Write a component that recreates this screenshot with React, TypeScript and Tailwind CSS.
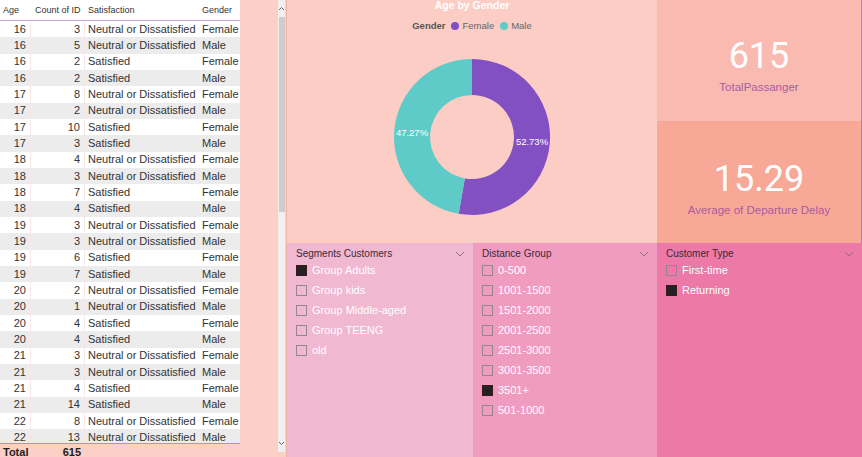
import React from "react";

const rows: [number, number, string, string][] = [
  [16, 3, "Neutral or Dissatisfied", "Female"],
  [16, 5, "Neutral or Dissatisfied", "Male"],
  [16, 2, "Satisfied", "Female"],
  [16, 2, "Satisfied", "Male"],
  [17, 8, "Neutral or Dissatisfied", "Female"],
  [17, 2, "Neutral or Dissatisfied", "Male"],
  [17, 10, "Satisfied", "Female"],
  [17, 3, "Satisfied", "Male"],
  [18, 4, "Neutral or Dissatisfied", "Female"],
  [18, 3, "Neutral or Dissatisfied", "Male"],
  [18, 7, "Satisfied", "Female"],
  [18, 4, "Satisfied", "Male"],
  [19, 3, "Neutral or Dissatisfied", "Female"],
  [19, 3, "Neutral or Dissatisfied", "Male"],
  [19, 6, "Satisfied", "Female"],
  [19, 7, "Satisfied", "Male"],
  [20, 2, "Neutral or Dissatisfied", "Female"],
  [20, 1, "Neutral or Dissatisfied", "Male"],
  [20, 4, "Satisfied", "Female"],
  [20, 4, "Satisfied", "Male"],
  [21, 3, "Neutral or Dissatisfied", "Female"],
  [21, 3, "Neutral or Dissatisfied", "Male"],
  [21, 4, "Satisfied", "Female"],
  [21, 14, "Satisfied", "Male"],
  [22, 8, "Neutral or Dissatisfied", "Female"],
  [22, 13, "Neutral or Dissatisfied", "Male"],
];

const font = { fontFamily: "'Liberation Sans', Arial, sans-serif" };

function Chevron() {
  return (
    <svg width="10" height="6" viewBox="0 0 10 6" className="shrink-0">
      <polyline points="1,1 5,5 9,1" fill="none" stroke="#8a6f7f" strokeWidth="1" />
    </svg>
  );
}

function Slicer({
  title,
  items,
  checked,
  bg,
  w,
}: {
  title: string;
  items: string[];
  checked: string;
  bg: string;
  w: string;
}) {
  return (
    <div className={`${w} ${bg} h-full flex flex-col pt-[4px] pl-[9px] pr-[8px]`}>
      <div className="flex items-center justify-between h-[13px] text-[10px] text-[#3a2a35]">
        <span>{title}</span>
        <Chevron />
      </div>
      {items.map((it) => (
        <div key={it} className="flex items-center h-[20px] gap-[5px]">
          {it === checked ? (
            <div className="w-[11px] h-[11px] bg-[#222226] border border-[#3a1a1a]" />
          ) : (
            <div className="w-[11px] h-[11px] border border-[#958590]" />
          )}
          <span className="text-[11px] text-white">{it}</span>
        </div>
      ))}
    </div>
  );
}

export default function App() {
  return (
    <div
      className="w-[862px] h-[457px] flex bg-[#fccfc7] overflow-hidden"
      style={font}
    >
      {/* Left table area */}
      <div className="w-[287px] h-full flex shrink-0">
        <div className="w-[240px] h-full flex flex-col shrink-0">
          <div className="h-[21px] bg-white flex text-[9px] text-[#333] border-b border-[#c9a6dc] shrink-0">
            <div className="w-[31px] pl-[3px] pt-[4px]">Age</div>
            <div className="w-[54px] pl-[4px] pt-[4px] whitespace-nowrap">Count of ID</div>
            <div className="w-[114px] pl-[3px] pt-[4px]">Satisfaction</div>
            <div className="flex-1 pl-[3px] pt-[4px]">Gender</div>
          </div>
          <div className="h-[422px] overflow-hidden shrink-0">
            {rows.map((r, i) => (
              <div
                key={i}
                className={`h-[16.33px] flex items-center text-[11px] text-[#333] leading-none ${
                  i % 2 === 0 ? "bg-white" : "bg-[#ececec]"
                }`}
              >
                <div className="w-[31px] h-full flex items-center justify-end pr-[4px] border-r border-[#f6e8e8]">
                  {r[0]}
                </div>
                <div className="w-[54px] h-full flex items-center justify-end pr-[4px] border-r border-[#f6e8e8]">
                  {r[1]}
                </div>
                <div className="w-[114px] h-full flex items-center pl-[3px] whitespace-nowrap">{r[2]}</div>
                <div className="flex-1 h-full flex items-center pl-[3px]">{r[3]}</div>
              </div>
            ))}
          </div>
          <div className="flex-1 flex items-center border-t border-[#b98dc6] text-[11px] font-bold text-[#222]">
            <div className="w-[31px] pl-[3px]">Total</div>
            <div className="w-[54px] text-right pr-[4px]">615</div>
          </div>
        </div>
        <div className="w-[38px] shrink-0" />
        <div className="w-[7px] h-[452px] bg-[#f0f0f0] flex flex-col items-center shrink-0">
          <div className="h-[17px] flex items-center justify-center">
            <svg width="7" height="5" viewBox="0 0 7 5">
              <polyline points="1,4 3.5,1.5 6,4" fill="none" stroke="#666" strokeWidth="1" />
            </svg>
          </div>
          <div className="w-[6px] h-[195px] bg-[#cdcdcd]" />
          <div className="flex-1" />
          <div className="h-[17px] flex items-center justify-center">
            <svg width="7" height="5" viewBox="0 0 7 5">
              <polyline points="1,1 3.5,3.5 6,1" fill="none" stroke="#666" strokeWidth="1" />
            </svg>
          </div>
        </div>
        <div className="flex-1 border-r border-[#f1b4ad]" />
      </div>

      {/* Right dashboard */}
      <div className="flex-1 h-full flex flex-col">
        <div className="h-[243px] flex shrink-0">
          {/* Donut */}
          <div className="w-[370px] h-full bg-[#fbcdc5] flex flex-col items-center">
            <div className="-mt-[2px] h-[14px] leading-[14px] text-[10.5px] font-bold text-white">
              Age by Gender
            </div>
            <div className="mt-[8px] h-[12px] flex items-center gap-[3px] text-[9.5px] text-[#666]">
              <span className="font-bold text-[#555] mr-[3px]">Gender</span>
              <span className="w-[8px] h-[8px] rounded-full bg-[#8350c4]" />
              <span className="mr-[3px]">Female</span>
              <span className="w-[8px] h-[8px] rounded-full bg-[#5ecbc8]" />
              <span>Male</span>
            </div>
            <svg width="200" height="160" viewBox="-20 0 200 160" className="mt-[25px]">
              <path
                d="M 80 2 A 78 78 0 1 1 66.69 156.85 L 72.83 121.38 A 42 42 0 1 0 80 38 Z"
                fill="#8350c4"
              />
              <path
                d="M 66.69 156.85 A 78 78 0 0 1 80 2 L 80 38 A 42 42 0 0 0 72.83 121.38 Z"
                fill="#5ecbc8"
              />
              <text x="140" y="88" textAnchor="middle" fontSize="9.5" fill="white" fontFamily="'Liberation Sans', sans-serif">
                52.73%
              </text>
              <text x="20" y="79" textAnchor="middle" fontSize="9.5" fill="white" fontFamily="'Liberation Sans', sans-serif">
                47.27%
              </text>
            </svg>
          </div>
          {/* Cards */}
          <div className="flex-1 h-full flex flex-col border-r border-[#c27ac2]">
            <div className="h-[121px] bg-[#f9bbb1] flex flex-col items-center pt-[34px]">
              <div className="text-[36px] leading-[44px] text-white" style={{ fontFamily: "Roboto, sans-serif" }}>
                615
              </div>
              <div className="text-[11.5px] text-[#a85d9e] leading-[16px] mt-[1px]">TotalPassanger</div>
            </div>
            <div className="flex-1 bg-[#f8a897] flex flex-col items-center pt-[36px]">
              <div className="text-[36px] leading-[44px] text-white" style={{ fontFamily: "Roboto, sans-serif" }}>
                15.29
              </div>
              <div className="text-[11.5px] text-[#a85d9e] leading-[16px] mt-[1px]">Average of Departure Delay</div>
            </div>
          </div>
        </div>
        <div className="flex-1 flex">
          <Slicer
            title="Segments Customers"
            items={["Group Adults", "Group kids", "Group Middle-aged", "Group TEENG", "old"]}
            checked="Group Adults"
            bg="bg-[#f1b8d1]"
            w="w-[186px]"
          />
          <Slicer
            title="Distance Group"
            items={["0-500", "1001-1500", "1501-2000", "2001-2500", "2501-3000", "3001-3500", "3501+", "501-1000"]}
            checked="3501+"
            bg="bg-[#f09bc0]"
            w="w-[184px]"
          />
          <Slicer
            title="Customer Type"
            items={["First-time", "Returning"]}
            checked="Returning"
            bg="bg-[#ec79a8]"
            w="flex-1"
          />
        </div>
      </div>
    </div>
  );
}
